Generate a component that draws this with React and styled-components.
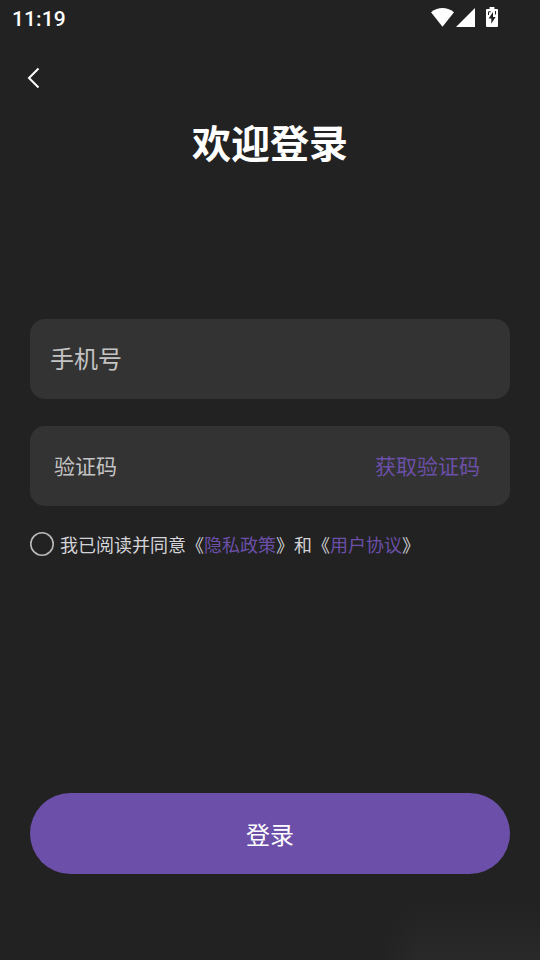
import { useState } from "react";
import styled, { createGlobalStyle } from "styled-components";

const GlobalStyle = createGlobalStyle`
  * {
    box-sizing: border-box;
  }
  body {
    margin: 0;
    background: #222222;
  }
  input,
  button {
    font-family: inherit;
    border: none;
    outline: none;
    background: none;
    padding: 0;
  }
`;

const Screen = styled.div`
  width: 100%;
  height: 100vh;
  display: flex;
  flex-direction: column;
  overflow: hidden;
  color: #ffffff;
  font-family: Roboto, "Noto Sans CJK SC", sans-serif;
  background: linear-gradient(
        to right,
        #222222,
        rgba(34, 34, 34, 0)
      )
      380px 900px / 40px 60px no-repeat,
    linear-gradient(to bottom, #222222, #292929) 380px 900px / 160px 60px
      no-repeat,
    #222222;
`;

const StatusBar = styled.div`
  height: 36px;
  padding: 0 42px 0 12px;
  display: flex;
  align-items: center;
  justify-content: space-between;
`;

const Clock = styled.span`
  font-size: 21px;
  font-weight: 500;
  line-height: 36px;
  letter-spacing: 0.1px;
  padding-top: 1px;
`;

const StatusIcons = styled.div`
  display: flex;
  height: 36px;

  svg {
    display: block;
  }
`;

const NavBar = styled.div`
  height: 85px;
  padding: 30px 0 0 24px;
`;

const BackButton = styled.button`
  display: block;
  width: 20px;
  height: 24px;
  color: inherit;

  svg {
    display: block;
  }
`;

const Title = styled.h1`
  margin: 0;
  height: 48px;
  font-size: 39px;
  font-weight: 700;
  line-height: 48px;
  text-align: center;
`;

const Form = styled.form`
  padding: 150px 30px 0;
  display: flex;
  flex-direction: column;
`;

const Field = styled.div`
  height: 80px;
  margin-bottom: 27px;
  padding: 2px 30px 0 ${(props) => props.$indent}px;
  display: flex;
  align-items: center;
  background: #333333;
  border-radius: 15px;
`;

const Input = styled.input`
  flex: 1;
  min-width: 0;
  height: 40px;
  color: #ffffff;
  font-size: ${(props) => props.$size}px;

  &::placeholder {
    color: #c4c4c4;
    opacity: 1;
  }
`;

const CodeButton = styled.button`
  color: #6b4fa8;
  font-size: 21px;
  line-height: 30px;
`;

const Agreement = styled.div`
  height: 24px;
  display: flex;
  align-items: center;
  gap: 6px;
  margin-top: -1px;
`;

const Radio = styled.button`
  width: 24px;
  height: 24px;
  flex: none;

  svg {
    display: block;
  }
`;

const Terms = styled.p`
  margin: 0;
  padding-top: 3px;
  color: #d3d3d8;
  font-size: 18px;
  line-height: 24px;
  white-space: nowrap;
`;

const Link = styled.span`
  color: #6b4fa8;
`;

const LoginButton = styled.button`
  height: 81px;
  margin-top: 237px;
  color: #ffffff;
  font-size: 24px;
  background: #6b4fa8;
  border-radius: 41px;
`;

export default function App() {
  const [phone, setPhone] = useState("");
  const [code, setCode] = useState("");
  const [agreed, setAgreed] = useState(false);

  return (
    <>
      <GlobalStyle />
      <Screen>
        <StatusBar>
          <Clock>11:19</Clock>
          <StatusIcons>
            <svg width="68" height="36" viewBox="430 0 68 36" fill="#ffffff">
              <path d="M431 12.2Q442.5 4 454 12.2L442.5 26.7Z" />
              <path d="M475 8V27H456Z" />
              <path d="M489.6 7H494.4V9H497Q498 9 498 10V26Q498 27 497 27H487Q486 27 486 26V10Q486 9 487 9H489.6Z" />
              <path
                d="M493 12L488.6 18.6H491.3V23.8L495.6 17H493Z"
                fill="#222222"
              />
              <path
                d="M488.5 15V11.8H490.8M495.5 11V14.5"
                fill="none"
                stroke="#222222"
                strokeWidth="1"
              />
            </svg>
          </StatusIcons>
        </StatusBar>
        <NavBar>
          <BackButton type="button" aria-label="返回">
            <svg width="20" height="24" viewBox="0 0 20 24" fill="none">
              <path
                d="M14.5 2.5L5 12L14.5 21.5"
                stroke="#ffffff"
                strokeWidth="2"
              />
            </svg>
          </BackButton>
        </NavBar>
        <Title>欢迎登录</Title>
        <Form onSubmit={(e) => e.preventDefault()}>
          <Field $indent={20}>
            <Input
              $size={24}
              placeholder="手机号"
              value={phone}
              onChange={(e) => setPhone(e.target.value)}
            />
          </Field>
          <Field $indent={24}>
            <Input
              $size={21}
              placeholder="验证码"
              value={code}
              onChange={(e) => setCode(e.target.value)}
            />
            <CodeButton type="button">获取验证码</CodeButton>
          </Field>
          <Agreement>
            <Radio
              type="button"
              aria-label="同意"
              onClick={() => setAgreed((prev) => !prev)}
            >
              <svg width="24" height="24" viewBox="0 0 24 24">
                <circle
                  cx="12"
                  cy="12"
                  r="11.2"
                  fill={agreed ? "#6b4fa8" : "none"}
                  stroke="#b8b8b8"
                  strokeWidth="1.6"
                />
              </svg>
            </Radio>
            <Terms>
              我已阅读并同意《<Link>隐私政策</Link>》和《<Link>用户协议</Link>》
            </Terms>
          </Agreement>
          <LoginButton>登录</LoginButton>
        </Form>
      </Screen>
    </>
  );
}
